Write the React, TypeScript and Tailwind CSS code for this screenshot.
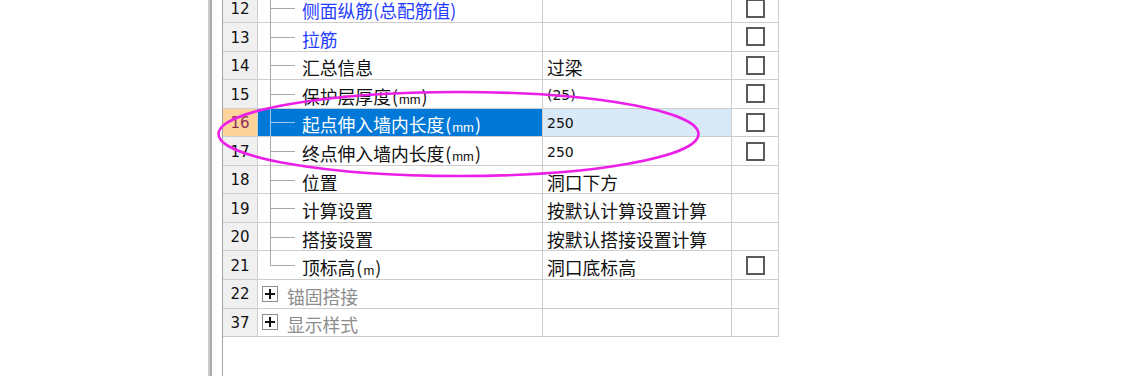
import React from "react";

type Row = {
  n: string;
  label: string;
  suffix?: string;
  value?: string;
  valueNum?: boolean;
  blue?: boolean;
  check?: boolean;
  selected?: boolean;
  last?: boolean;
  group?: boolean;
};

const rows: Row[] = [
  { n: "12", label: "侧面纵筋(总配筋值)", blue: true, check: true },
  { n: "13", label: "拉筋", blue: true, check: true },
  { n: "14", label: "汇总信息", value: "过梁", check: true },
  { n: "15", label: "保护层厚度", suffix: "mm", value: "(25)", valueNum: true, check: true },
  { n: "16", label: "起点伸入墙内长度", suffix: "mm", value: "250", valueNum: true, check: true, selected: true },
  { n: "17", label: "终点伸入墙内长度", suffix: "mm", value: "250", valueNum: true, check: true },
  { n: "18", label: "位置", value: "洞口下方" },
  { n: "19", label: "计算设置", value: "按默认计算设置计算" },
  { n: "20", label: "搭接设置", value: "按默认搭接设置计算" },
  { n: "21", label: "顶标高", suffix: "m", value: "洞口底标高", check: true, last: true },
  { n: "22", label: "锚固搭接", group: true },
  { n: "37", label: "显示样式", group: true },
];

const cjk = { fontFamily: '"Noto Sans CJK SC", "Noto Sans", sans-serif' };
const num = { fontFamily: '"DejaVu Sans", "Liberation Sans", sans-serif' };
const lat = { fontFamily: '"Liberation Sans", Arial, sans-serif' };

function Suffix({ s }: { s: string }) {
  return (
    <>
      <span className="ml-[1px]" style={cjk}>(</span>
      <span className="text-[13px] mx-[1px]" style={lat}>
        {s}
      </span>
      <span style={cjk}>)</span>
    </>
  );
}

function TreeCell({ r }: { r: Row }) {
  const bg = r.selected ? "bg-[#0078d7]" : "bg-white";
  const color = r.selected
    ? "text-white"
    : r.blue
    ? "text-[#1f3cff]"
    : r.group
    ? "text-[#8c8c8c]"
    : "text-[#111111]";
  const lineColor = r.selected ? "bg-[#9cc6ee]" : "bg-[#a8a8a8]";
  return (
    <div className={`relative w-[285px] h-full border-r border-[#cdcdcd] ${bg} flex items-center`}>
      {r.group ? (
        <>
          <div className="ml-[4px] w-[16px] h-[16px] border border-[#8f8f8f] bg-white flex items-center justify-center">
            <div className="relative w-[10px] h-[10px]">
              <div className="absolute left-0 right-0 top-[4px] h-[2px] bg-[#111111]" />
              <div className="absolute top-0 bottom-0 left-[4px] w-[2px] bg-[#111111]" />
            </div>
          </div>
          <span className={`ml-[9px] pt-[6px] text-[17.8px] leading-none ${color}`} style={cjk}>
            {r.label}
          </span>
        </>
      ) : (
        <>
          <div
            className={`absolute left-[12px] w-[1px] top-0 ${lineColor} ${r.last ? "h-1/2" : "bottom-[-1px]"}`}
          />
          <div className={`absolute left-[12px] w-[25px] top-1/2 h-[1px] ${lineColor}`} />
          <span className={`ml-[44px] pt-[6px] text-[17.8px] leading-none whitespace-nowrap ${color}`} style={cjk}>
            {r.label}
            {r.suffix && <Suffix s={r.suffix} />}
          </span>
        </>
      )}
    </div>
  );
}

function RowView({ r }: { r: Row }) {
  return (
    <div className="flex h-[28.55px] border-b border-[#cdcdcd]">
      <div
        className={`w-[35px] h-full border-r border-[#cdcdcd] flex items-center justify-center text-[15px] pt-[2px] ${
          r.selected ? "bg-[#fdd39a] text-[#8b2f52]" : "bg-[#f0f0f0] text-[#111111]"
        }`}
        style={num}
      >
        {r.n}
      </div>
      <TreeCell r={r} />
      <div
        className={`w-[189px] h-full border-r border-[#cdcdcd] flex items-center pl-[4px] ${
          r.selected ? "bg-[#d9e9f8]" : "bg-white"
        }`}
      >
        {r.value &&
          (r.valueNum ? (
            <span className="text-[14px] text-[#111111] pt-[3px]" style={num}>
              {r.value}
            </span>
          ) : (
            <span className="text-[17.8px] leading-none pt-[6px] text-[#111111] whitespace-nowrap" style={cjk}>
              {r.value}
            </span>
          ))}
      </div>
      <div className="w-[46px] h-full bg-white flex items-center justify-center">
        {r.check && <div className="w-[19px] h-[19px] border-2 border-[#5a5a5a] bg-white" />}
      </div>
    </div>
  );
}

export default function App() {
  return (
    <div className="relative w-[1141px] h-[376px] bg-white overflow-hidden flex">
      <div className="w-[208px] shrink-0" />
      <div className="w-[2px] shrink-0 bg-[#cbcbcb]" />
      <div className="w-[2px] shrink-0 bg-[#a9a9a9]" />
      <div className="w-[10px] shrink-0" />
      <div className="h-full border-l border-[#a3a3a3] shrink-0">
        <div className="mt-[-5.5px] w-[556px] border-r border-[#cdcdcd]">
          {rows.map((r) => (
            <RowView key={r.n} r={r} />
          ))}
        </div>
      </div>
      <svg
        className="absolute inset-0 pointer-events-none"
        width="1141"
        height="376"
        viewBox="0 0 1141 376"
      >
        <ellipse cx="458.5" cy="134" rx="240" ry="42" fill="none" stroke="#ec1fe8" strokeWidth="2.6" />
      </svg>
    </div>
  );
}
